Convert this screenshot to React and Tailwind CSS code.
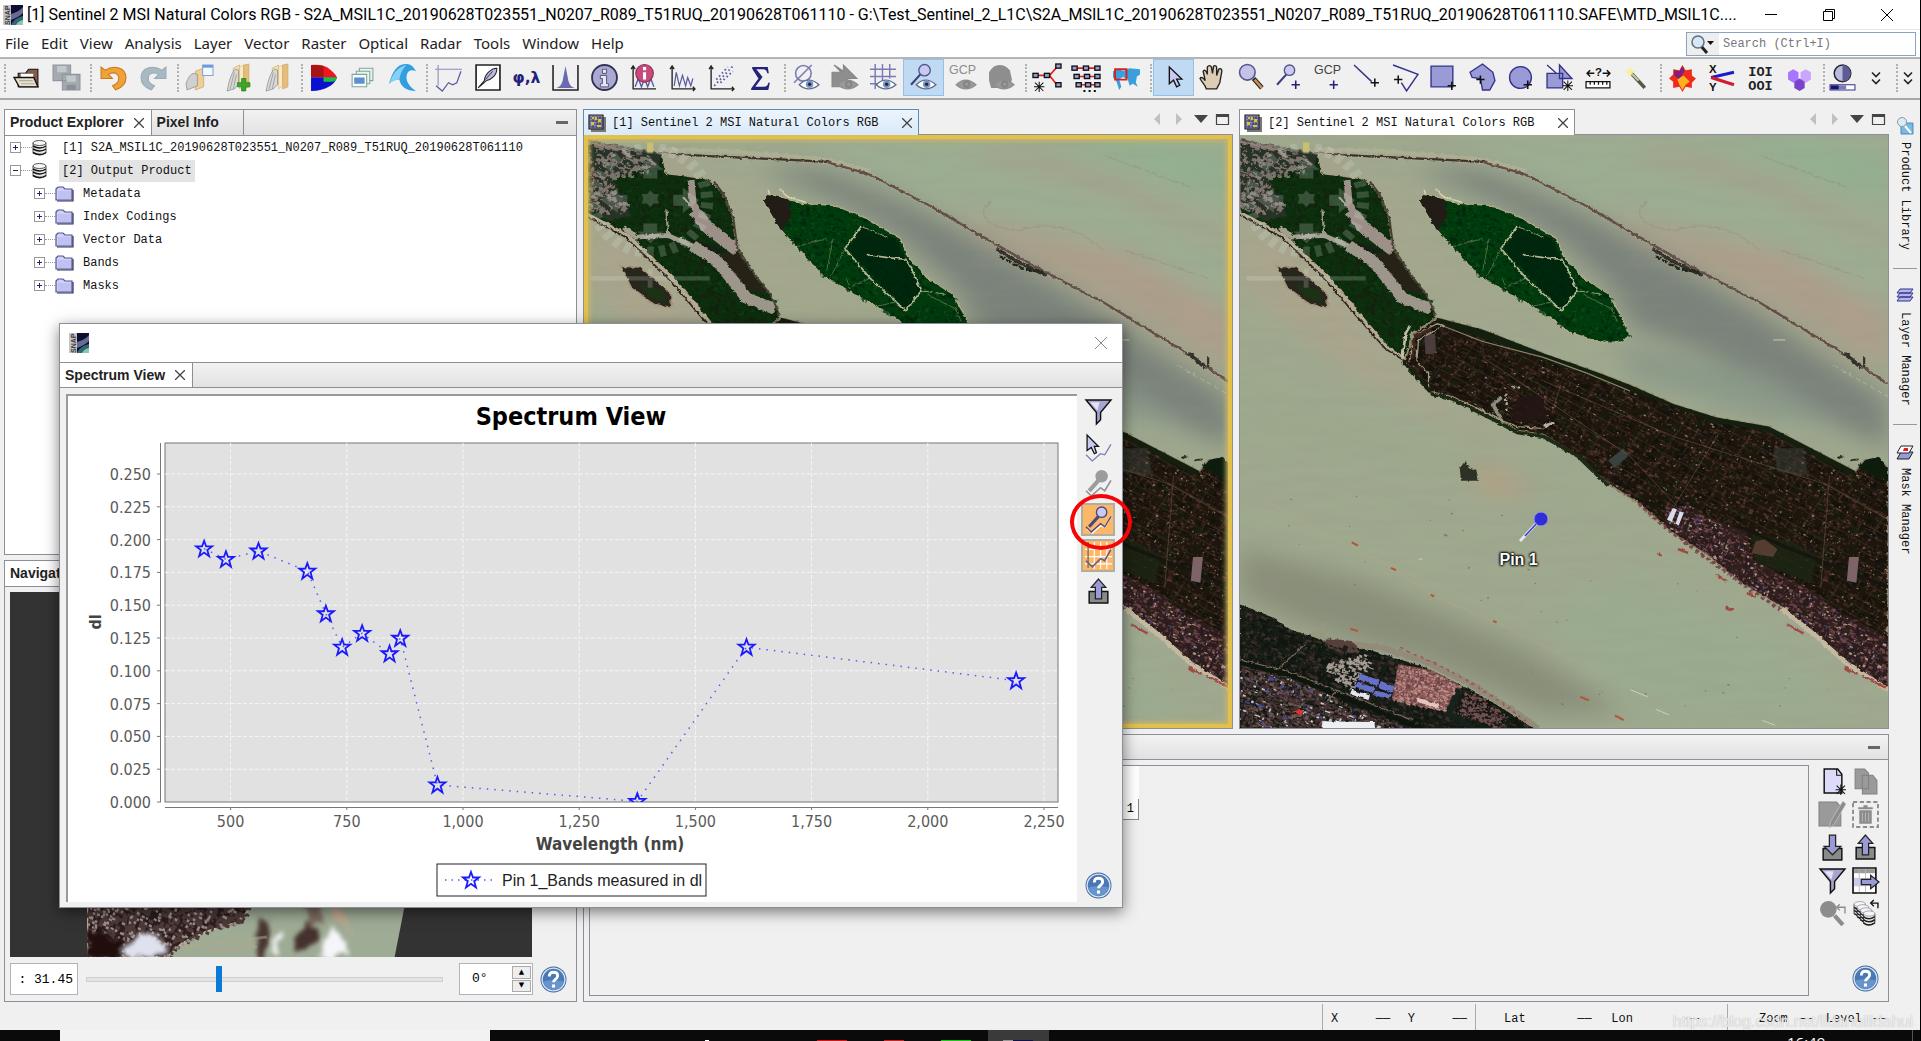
import React from "react";

const FILL = "#9a9ad6";

// small seeded generator so the imagery is stable between renders
const makeRandom = (seed) => () => {
  seed = (seed * 1664525 + 1013904223) % 4294967296;
  return seed / 4294967296;
};

const inside = (pts, x, y) => {
  let hit = false;
  for (let i = 0, j = pts.length - 1; i < pts.length; j = i++) {
    const [xi, yi] = pts[i];
    const [xj, yj] = pts[j];
    if (yi > y !== yj > y && x < ((xj - xi) * (y - yi)) / (yj - yi) + xi) hit = !hit;
  }
  return hit;
};

const specks = (pts, count, max, seed) => {
  const rnd = makeRandom(seed);
  const xs = pts.map((p) => p[0]);
  const ys = pts.map((p) => p[1]);
  const x0 = Math.min(...xs);
  const y0 = Math.min(...ys);
  const w = Math.max(...xs) - x0;
  const h = Math.max(...ys) - y0;
  let d = "";
  for (let i = 0; i < count; i++) {
    const x = x0 + rnd() * w;
    const y = y0 + rnd() * h;
    const a = 2 + rnd() * rnd() * max * 1.6;
    const b = 2 + rnd() * rnd() * max;
    if (inside(pts, x, y)) {
      d += `M${x.toFixed(0)} ${y.toFixed(0)}l${a.toFixed(1)} ${(a * 0.45).toFixed(1)}l${(-b * 0.4).toFixed(1)} ${b.toFixed(1)}l${(-a).toFixed(1)} ${(-a * 0.45).toFixed(1)}z`;
    }
  }
  return d;
};

const toPath = (pts) => "M" + pts.map((p) => p.join(" ")).join("L") + "Z";

const DELTA = [[0, 48], [90, 72], [180, 85], [190, 135], [240, 142], [290, 150], [320, 185], [342, 240], [352, 320], [400, 400], [430, 440], [455, 495], [440, 512], [395, 540], [388, 608], [340, 575], [270, 485], [205, 400], [100, 290], [0, 232]];
const ISLAND = [[415, 205], [425, 190], [455, 196], [500, 212], [580, 218], [650, 250], [728, 300], [745, 345], [790, 400], [848, 440], [880, 500], [896, 545], [880, 560], [830, 560], [760, 535], [700, 485], [610, 430], [550, 390], [490, 320], [450, 270]];
const TOWN = [[400, 540], [455, 500], [560, 530], [700, 590], [830, 640], [900, 670], [1000, 718], [1100, 752], [1220, 775], [1300, 820], [1420, 888], [1440, 860], [1470, 853], [1495, 880], [1495, 1440], [1400, 1370], [1330, 1300], [1250, 1230], [1150, 1165], [1080, 1100], [1000, 1045], [920, 970], [850, 920], [780, 850], [700, 795], [640, 785], [590, 750], [490, 700], [440, 690], [380, 610]];
const PORT = [[980, 975], [1030, 975], [1090, 1010], [1170, 1040], [1180, 1110], [1300, 1180], [1380, 1240], [1495, 1310], [1495, 1440], [1400, 1370], [1330, 1300], [1250, 1230], [1150, 1165], [1080, 1100], [980, 1025]];
const SOUTH = [[0, 1225], [60, 1250], [120, 1290], [200, 1318], [300, 1340], [430, 1385], [530, 1440], [610, 1490], [680, 1540], [0, 1540]];
const SUBURB = [[0, 1375], [110, 1400], [240, 1470], [400, 1540], [0, 1540]];
const SHEDS = [[200, 1370], [290, 1345], [300, 1380], [255, 1440], [200, 1400]];
const ROOFS = [[365, 1375], [440, 1390], [510, 1430], [480, 1495], [350, 1465]];
const BLOCKS = [[520, 1440], [560, 1455], [620, 1510], [600, 1535], [500, 1500]];
const SEA = [[60, 900], [500, 960], [900, 1100], [1300, 1300], [1490, 1530], [700, 1530], [200, 1250], [60, 1050]];

const ART = {
  delta: specks(DELTA, 1800, 9, 3),
  deltaGreen: specks(DELTA, 1200, 8, 4),
  deltaLight: specks([[0, 48], [150, 80], [150, 130], [60, 150], [110, 240], [0, 225]], 360, 14, 9),
  islandDark: specks(ISLAND, 1400, 10, 5),
  islandLight: specks(ISLAND, 1000, 6, 6),
  town1: specks(TOWN, 6000, 7, 11),
  town2: specks(TOWN, 3600, 6, 12),
  town3: specks(TOWN, 3600, 16, 13),
  town4: specks(TOWN, 900, 3, 14),
  town5: specks(TOWN, 1500, 14, 15),
  port1: specks(PORT, 2600, 7, 21),
  port2: specks(PORT, 700, 5, 22),
  port3: specks(PORT, 500, 5, 23),
  port4: specks(PORT, 900, 9, 24),
  south1: specks(SOUTH, 1500, 9, 31),
  south4: specks(SOUTH, 1800, 14, 34),
  south5: specks(SOUTH, 1300, 12, 35),
  suburb1: specks(SUBURB, 1700, 8, 36),
  suburb2: specks(SUBURB, 700, 6, 37),
  suburb3: specks(SUBURB, 160, 7, 38),
  suburb4: specks(SUBURB, 90, 9, 39),
  sheds: specks(SHEDS, 260, 8, 40),
  roofs: specks(ROOFS, 900, 6, 41),
  roofs2: specks(ROOFS, 420, 5, 42),
  blocks: specks(BLOCKS, 420, 6, 43),
  ships: specks(SEA, 80, 4, 51),
};

const Ticks = () => (
  <g fill="#dfe6df" opacity="0.2">
    {Array.from({ length: 30 }, (_, i) => (
      <rect key={i} x="145" y="58" width="15" height="28" transform={`rotate(${i * 12} 153 203)`} />
    ))}
    <path d="M153 96l30 30h-14v22h-32v-22h-14z" />
    <path d="M153 312l30 -30h-14v-20h-32v20h-14z" />
    <path d="M40 203l38 -32v18h22v28h-22v18z" />
    <path d="M266 203l-38 -32v18h-22v28h22v18z" />
    <path d="M153 178l8 9 12 0-4 12 4 12-12 0-8 9-8-9-12 0 4-12-4-12 12 0z" />
    <rect x="15" y="395" width="275" height="11" />
    <rect x="147" y="376" width="11" height="48" />
  </g>
);

const Imagery = ({ id }) => (
  <svg viewBox="0 38 1495 1499" preserveAspectRatio="none" className="absolute inset-0 block h-full w-full" role="img" aria-label="Natural colors image">
    <defs>
      <filter id={`${id}-soft`} x="-30%" y="-30%" width="160%" height="160%">
        <feGaussianBlur stdDeviation="30" />
      </filter>
      <filter id={`${id}-rough`} x="-5%" y="-5%" width="110%" height="110%">
        <feTurbulence type="fractalNoise" baseFrequency="0.09" numOctaves="3" seed="4" />
        <feDisplacementMap in="SourceGraphic" scale="9" xChannelSelector="R" yChannelSelector="G" />
      </filter>
      <filter id={`${id}-grain`} x="0" y="0" width="100%" height="100%">
        <feTurbulence type="fractalNoise" baseFrequency="0.008 0.04" numOctaves="5" seed="8" />
        <feColorMatrix values="0 0 0 0 0.3  0 0 0 0 0.3  0 0 0 0 0.24  0.9 0 0 0 -0.36" />
      </filter>
      <clipPath id={`${id}-town`}>
        <path d={toPath(TOWN)} />
      </clipPath>
      <clipPath id={`${id}-island`}>
        <path d={toPath(ISLAND)} />
      </clipPath>
      <pattern id={`${id}-streets`} width="74" height="42" patternUnits="userSpaceOnUse" patternTransform="rotate(31)">
        <path d="M0 8h74M0 27h40M14 0v42M52 8v19" stroke="#84604f" strokeWidth="1.500" fill="none" />
      </pattern>
    </defs>

    {/* water */}
    <rect y="38" width="1495" height="1499" fill="#9fa98e" />
    <g filter={`url(#${id}-soft)`}>
      <path d="M500 38H1500V640L1200 450 800 210 560 100z" fill="#9cad92" />
      <path d="M820 230L1000 270 1250 330 1500 480V640L1250 480 940 300z" fill="#ad9f8b" />
      <path d="M900 90L1200 180 1500 330V290L1200 130 960 70z" fill="#a5a28c" />
      <path d="M1100 60L1500 200V100L1300 50z" fill="#93b091" />
      <path d="M400 120L560 125 760 215 960 335 1180 475 1495 710V830L1300 740 1100 600 1000 560 900 520 860 430 720 290 600 215z" fill="#7a827a" />
      <path d="M860 560L1200 640 1400 780 1200 750 900 650z" fill="#8a9a89" />
      <path d="M200 130L400 160 420 260 560 440 760 560 1000 640 600 520 460 480z" fill="#a5a78c" />
      <path d="M0 250L160 330 350 600 500 740 700 830 560 800 260 640 0 420z" fill="#aaa58c" />
      <path d="M0 620L400 780 700 880 900 1040 600 940 0 800z" fill="#9da98d" />
      <path d="M0 1080L300 1170 640 1330 900 1500H700L430 1370 150 1280 0 1200z" fill="#898e79" />
      <path d="M540 860L680 920 620 960 540 930z" fill="#b3a085" />
      <path d="M900 1150L1250 1300 1400 1520H900L700 1250z" fill="#9bab8f" />
    </g>
    <rect y="38" width="1495" height="1499" filter={`url(#${id}-grain)`} opacity="0.4" />
    <g fill="none" stroke="#978977" strokeWidth="3" opacity="0.45" filter={`url(#${id}-rough)`}>
      <path d="M940 205C900 240 930 270 1000 280 1060 260 1100 265 1150 290L1200 330" />
      <path d="M1200 90L1400 170M1250 330L1440 400" />
    </g>
    <g fill="none" stroke="#b3a684" strokeWidth="3" opacity="0.6" filter={`url(#${id}-rough)`}>
      <path d="M60 960L190 1045 350 1130 440 1200 590 1270 740 1350" />
      <path d="M740 1350L980 1490M230 1065L420 1165" opacity="0.6" />
    </g>

    {/* sea wall */}
    <g fill="none" filter={`url(#${id}-rough)`}>
      <path d="M180 74L320 78 480 92 560 100 660 128" stroke="#b3b294" strokeWidth="10" opacity="0.7" />
      <path d="M170 84L300 92 460 100 560 106 660 138 800 218 940 308 1070 388 1200 462 1380 582 1495 668" stroke="#c4b598" strokeWidth="9" opacity="0.4" />
      <path d="M170 84L300 92 460 100 560 106 660 138 800 218 940 308 1070 388 1200 462 1380 582 1495 668" stroke="#62504a" strokeWidth="6" />
      <path d="M170 84L300 92 460 100 560 106" stroke="#3d3228" strokeWidth="4" />
      <path d="M950 324L1000 358 1065 392M1395 590L1432 625" stroke="#33302a" strokeWidth="9" />
      <path d="M960 345L1010 375 1060 385" stroke="#23281f" strokeWidth="7" strokeDasharray="12 5" />
      <path d="M1370 620L1495 700" stroke="#b5b5a4" strokeWidth="2" strokeDasharray="12 8" />
    </g>

    {/* delta, upper left */}
    <g filter={`url(#${id}-rough)`}>
      <path d={toPath(DELTA)} fill="#0b2d10" stroke="#a99d86" strokeWidth="4" />
      <path d={ART.deltaGreen} fill="#0d3a14" opacity="0.9" />
      <path d={ART.delta} fill="#171c12" opacity="0.7" />
      <path d="M0 48L180 85 170 120 60 140 110 240 60 255 0 225z" fill="#3a3634" opacity="0.6" />
      <path d={ART.deltaLight} fill="#94857e" opacity="0.8" />
      <path d="M180 82L250 92 240 142 190 132z" fill="#a3a48b" />
      <path d="M0 55L90 75 110 95" fill="none" stroke="#8f8078" strokeWidth="6" />
      <path d="M312 340L352 332 422 438 385 432 332 390z" fill="#272418" />
      <path d="M240 300L300 320 320 335 290 345z" fill="#1c1c14" />
      <path d="M92 272L120 296 195 292 250 318 305 352" fill="none" stroke="#a39e90" strokeWidth="12" />
      <path d="M250 318L305 354 345 408 375 450 440 478" fill="none" stroke="#9d968b" strokeWidth="28" />
      <path d="M247 152L252 215 270 250" fill="none" stroke="#9c9088" strokeWidth="16" />
      <path d="M256 230L285 272 325 306 354 330" fill="none" stroke="#9c9088" strokeWidth="30" />
      <path d="M190 225L194 292M226 192L252 225" stroke="#a09a8c" strokeWidth="5" />
      <path d="M300 156L322 188 344 245 354 325 400 400 432 445 452 495" fill="none" stroke="#4a4034" strokeWidth="5" />
      <path d="M0 236L100 292 205 402 270 487 340 577 392 612" fill="none" stroke="#b5aa90" strokeWidth="10" />
      <path d="M0 240L96 296 200 406 265 491 336 579 390 616" fill="none" stroke="#2b241d" strokeWidth="4" />
      <path d="M375 600L382 540 392 520" fill="none" stroke="#c2bba8" strokeWidth="6" />
      <path d="M85 370L130 372 200 438 202 475 160 465 110 425z" fill="#28281c" stroke="#a59078" strokeWidth="3" />
      <path d="M130 415L180 430 192 462 150 450z" fill="#1c3119" />
    </g>

    {/* green island */}
    <g filter={`url(#${id}-rough)`}>
      <path d={toPath(ISLAND)} fill="#06390d" stroke="#b5a88b" strokeWidth="6" />
      <path d={toPath(ISLAND)} fill="#053a0c" />
      <path d={ART.islandDark} fill="#04260a" opacity="0.7" />
      <path d={ART.islandLight} fill="#0d4a14" opacity="0.8" />
      <path d="M415 205L425 190 470 200 480 240 455 280z" fill="#201f14" />
      <path d="M610 330L640 268 720 300 740 350 776 430 742 478z" fill="#03230a" opacity="0.8" />
      <g clipPath={`url(#${id}-island)`} fill="none" stroke="#b9b698">
        <path d="M640 268L602 325 660 400 742 482 778 432 758 380 742 352 700 348 650 340" strokeWidth="4" />
        <path d="M778 432L835 440M640 268L700 298" strokeWidth="2" />
        <path d="M575 300L560 380M600 330L570 395M660 400L610 425M560 300L490 320M790 440L860 480 870 510M610 420L606 400M680 470L720 460" strokeWidth="2" opacity="0.5" />
      </g>
      <path d="M425 175L428 186M452 175L470 195 512 208" fill="none" stroke="#d9ceb0" strokeWidth="4" />
    </g>

    {/* town */}
    <g filter={`url(#${id}-rough)`}>
      <path d={toPath(TOWN)} fill="#1f1410" stroke="#93886c" strokeWidth="4" />
    </g>
    <g clipPath={`url(#${id}-town)`}>
      <path d={ART.town1} fill="#432822" opacity="0.8" />
      <path d={ART.town3} fill="#0e100b" opacity="0.7" />
      <path d={ART.town5} fill="#18230f" opacity="0.7" />
      <rect x="380" y="490" width="1115" height="950" fill={`url(#${id}-streets)`} opacity="0.35" />
      <path d={ART.town2} fill="#6b463d" opacity="0.6" />
      <path d={ART.town4} fill="#b89e91" opacity="0.7" />
      <path d="M455 500L700 590 900 670 1100 752 1220 775 1420 888" fill="none" stroke="#14200f" strokeWidth="26" />
      <path d="M455 515L560 560 700 600 800 640 900 685" fill="none" stroke="#8a806a" strokeWidth="3" />
      <path d="M640 700L700 695 705 760 625 760z" fill="#241515" opacity="0.9" />
      <path d="M425 545L450 540 452 590 428 592z" fill="#4c3e3c" />
      <path d="M1230 830L1300 830 1310 900 1240 890z" fill="#3d443d" opacity="0.45" />
      <path d="M1180 1040L1280 1070 1330 1100 1320 1170 1190 1120z" fill="#1b2413" opacity="0.85" />
      <path d="M1190 1065L1210 1060 1240 1085 1230 1105 1180 1095z" fill="#553c30" />
      <path d="M850 860L885 830 895 850 865 880z" fill="#3a423f" />
      <path d="M920 960L1080 1020 1170 1035 1260 1080 1495 1180" fill="none" stroke="#15160f" strokeWidth="8" />
      <path d="M700 660L1000 800 1350 920 1495 1010M560 600L900 850 1020 990M1360 900L1340 1180M1100 800L1000 980M720 740L740 670" fill="none" stroke="#8a6355" strokeWidth="2" opacity="0.55" />
      <path d={toPath(PORT)} fill="#3d2429" opacity="0.5" />
      <path d={ART.port4} fill="#241a1a" opacity="0.8" />
      <path d={ART.port1} fill="#7d4f52" opacity="0.75" />
      <path d={ART.port2} fill="#d9c6c0" opacity="0.7" />
      <path d={ART.port3} fill="#5a55a8" opacity="0.6" />
      <path d="M985 1010L998 982 1008 984 996 1016zM1005 1020L1014 990 1024 992 1012 1026z" fill="#d8dcea" />
      <path d="M1405 1105L1428 1105 1422 1170 1400 1165z" fill="#7d6468" />
    </g>
    <g fill="none" filter={`url(#${id}-rough)`}>
      <path d="M390 612L400 545 455 515 470 520 412 555 408 610 435 640 435 685 490 700 590 752 640 775 700 780" stroke="#a59b80" strokeWidth="3" />
      <path d="M398 600L403 548 440 528" stroke="#3d2b22" strokeWidth="8" />
      <path d="M602 755L584 720 604 700" stroke="#8e8c80" strokeWidth="9" />
      <path d="M612 692L618 740M628 676h18" stroke="#b5b0a4" strokeWidth="5" strokeDasharray="7 5" />
      <path d="M700 775L725 765" stroke="#b8ae9e" strokeWidth="8" />
      <path d="M375 610L440 688" stroke="#12200f" strokeWidth="9" />
      <path d="M440 692L490 705 590 760 640 790 700 800 780 850 850 925" stroke="#1a2a16" strokeWidth="9" />
      <path d="M920 970L980 1030 1080 1110 1160 1175 1250 1240" stroke="#7a4a4a" strokeWidth="8" strokeDasharray="9 7" />
      <path d="M1250 1235L1330 1305 1400 1375 1495 1440" stroke="#c4b9a0" strokeWidth="11" />
      <path d="M1100 1150L1122 1165M965 1095L972 1103M1010 1085L1035 1095M1170 1195L1190 1206M1120 1232L1137 1238M1262 1275L1300 1298M1395 1385L1425 1400M1435 1405L1490 1435" stroke="#a04a42" strokeWidth="6" />
      <path d="M1440 600V625M1380 855L1392 850M1410 860L1425 858" stroke="#332f28" strokeWidth="5" />
    </g>
    <path d="M1425 875L1445 858 1475 852 1495 885V915L1450 895z" fill="#0f1f0e" filter={`url(#${id}-rough)`} />

    {/* south bank */}
    <g filter={`url(#${id}-rough)`}>
      <path d={toPath(SOUTH)} fill="#151a12" />
      <path d="M200 1315L330 1335 430 1370 530 1425 640 1500 690 1540" fill="none" stroke="#928b79" strokeWidth="15" />
      <path d="M160 1300L200 1265 195 1320z" fill="#96997f" />
      <path d="M200 1310L260 1318 276 1345 240 1350 195 1330z" fill="#54413a" />
    </g>
    <path d={ART.south5} fill="#33231f" opacity="0.6" />
    <path d={ART.south4} fill="#0d150d" opacity="0.8" />
    <path d={ART.south1} fill="#5c4640" opacity="0.5" />
    <path d={ART.suburb1} fill="#4d3536" opacity="0.9" />
    <path d={ART.suburb2} fill="#7d6663" opacity="0.75" />
    <path d={ART.suburb3} fill="#e2dcdc" opacity="0.85" />
    <path d={ART.suburb4} fill="#4a52b8" opacity="0.7" />
    <path d={ART.sheds} fill="#c4bbb2" opacity="0.8" />
    <path d={toPath(ROOFS)} fill="#6e4444" />
    <path d={ART.roofs} fill="#9a6462" opacity="0.9" />
    <path d={ART.roofs2} fill="#c49c98" opacity="0.8" />
    <path d={ART.blocks} fill="#7d5558" opacity="0.9" />
    <g filter={`url(#${id}-rough)`}>
      <path d="M278 1400L322 1416 316 1430 272 1414zM325 1418L358 1432 350 1448 318 1436zM270 1420L312 1436 306 1448 262 1434zM312 1442L350 1452 344 1464 308 1454z" fill="#6670c8" />
      <path d="M258 1440L300 1455 296 1466 254 1452z" fill="#e5e6f4" />
      <path d="M410 1460L460 1478 455 1488 408 1470z" fill="#e2c4c0" />
      <path d="M190 1520L310 1522 312 1540H188z" fill="#eceff4" />
      <path d="M120 1495L145 1490 142 1505z" fill="#d83434" />
      <path d="M0 1372L110 1402 220 1452 420 1540" fill="none" stroke="#10140f" strokeWidth="12" />
      <path d="M0 1365L110 1393 225 1443 400 1518M150 1325L90 1385M225 1443L200 1470" fill="none" stroke="#7a6a5a" strokeWidth="3" />
      <path d="M505 1440L480 1500 540 1537" fill="none" stroke="#16211a" strokeWidth="14" />
      <path d="M370 1335L430 1365 500 1400 600 1470 660 1520" fill="none" stroke="#a05650" strokeWidth="4" strokeDasharray="8 9" />
    </g>

    {/* rock, ships */}
    <path d="M507 880L520 862 528 878 545 885 551 912H510z" fill="#2f3226" filter={`url(#${id}-rough)`} />
    <path d={ART.ships} fill="#7d6455" opacity="0.7" />
    <path d="M258 1068L272 1076M348 1132L360 1138M440 1200L448 1205M584 1266L592 1270M255 1286L272 1292M785 1458L805 1467M865 1505L885 1517" stroke="#b5543c" strokeWidth="5" />
    <path d="M412 1110h9M1230 556h28M1205 1518l30 12M900 1440l40 18M960 1490l30 14" stroke="#d2d8c0" strokeWidth="2" />
    <rect x="146" y="56" width="14" height="26" fill="#cdb84a" opacity="0.8" />
    <Ticks />
  </svg>
);

const Svg = ({ children }) => (
  <svg viewBox="0 0 26 26" className="h-[27px] w-[27px] shrink-0 overflow-visible" fill="none" aria-hidden="true">
    {children}
  </svg>
);

const Plus = ({ x = 20, y = 20, c = "#111" }) => <path d={`M${x - 4} ${y}h8M${x} ${y - 4}v8`} stroke={c} strokeWidth="1.500" />;
const Spark = ({ x = 20, y = 20 }) => (
  <path d={`M${x - 5} ${y}h10M${x} ${y - 5}v10M${x - 4} ${y - 4}l8 8M${x + 4} ${y - 4}l-8 8`} stroke="#111" strokeWidth="1" />
);
const Eye = ({ gray }) => (
  <g>
    <path d="M6 20q9-9 19 0q-10 8-19 0z" fill={gray ? "#9a9a9a" : "#fff"} stroke={gray ? "#8f8f8f" : "#5d6b8c"} strokeWidth="1.200" />
    <circle cx="16" cy="19.500" r="3.600" fill={gray ? "#858585" : "#7f97bd"} />
    <circle cx="16" cy="19.500" r="1.600" fill={gray ? "#9a9a9a" : "#1c2b52"} />
  </g>
);
const Nodes = ({ pts }) => pts.map(([x, y]) => <rect key={`${x}-${y}`} x={x} y={y} width="5" height="4" fill="#9a9ad6" stroke="#111" strokeWidth="1.300" />);

const Books = ({ extra }) => (
  <g>
    <path d="M8 4l6-3v18l-6 4z" fill="#f3dcae" stroke="#c9a566" strokeWidth=".6" />
    <path d="M14 3l4-2v20l-4 3z" fill="#fbe9c4" stroke="#d6b67d" strokeWidth=".6" />
    <path d="M18 1l5-1v22l-5 2z" fill="#e6bd7c" stroke="#c9a566" strokeWidth=".7" />
    <path d="M4 17q3-10 6-12l3 1v14l-4 4-7 2z" fill="#d8d8d6" stroke="#8a8a88" strokeWidth=".7" />
    <path d="M5 24l4-16M8 24l3-14" stroke="#8f8f8d" strokeWidth=".7" />
    {extra}
  </g>
);

const Pointer = () => <path d="M9 3v16l4-3.500 3 6.500 3-1.500-3-6h5z" fill="#c9c9f2" stroke="#111" strokeWidth="1.300" />;

const icons = {
  open: (
    <Svg>
      <path d="M5 9h7l3-4h9v17H5z" fill="#8a5a48" stroke="#111" />
      <path d="M7 9h13v6H7z" fill="#fff" stroke="#555" strokeWidth=".7" />
      <path d="M1 13h19l4 9H6z" fill="#e6e0cc" stroke="#111" strokeWidth="1.300" />
      <path d="M6 16h13M8 19h13" stroke="#b3ad98" />
    </Svg>
  ),
  save: (
    <Svg>
      <path d="M0 1h17v15H0zM9 10h17v15H9z" fill="#a5aab0" stroke="#8f959c" />
      <path d="M4 2h9v6H4zM13 11h9v6h-9z" fill="#c3c8cc" />
      <path d="M13 20h9v5h-9z" fill="#8b9096" />
    </Svg>
  ),
  undo: (
    <Svg>
      <path d="M1 3v11h11l-4-4c5-3 10-1 10 4 0 4-3 6-6 7l3 4c6-2 10-6 10-12C25 4 14 0 5 6z" fill="#f0a13a" stroke="#c77a1c" />
    </Svg>
  ),
  redo: (
    <Svg>
      <path d="M25 3v11H14l4-4c-5-3-10-1-10 4 0 4 3 6 6 7l-3 4C5 23 1 19 1 13 1 4 12 0 21 6z" fill="#a9b9c3" stroke="#9aabb6" />
    </Svg>
  ),
  bookWindow: (
    <Svg>
      <path d="M9 7l8-3v18l-8 3z" fill="#f0cf96" stroke="#c9a566" strokeWidth=".7" />
      <path d="M0 19q3-9 7-10l4 1v11l-10 4z" fill="#d0d0ce" stroke="#8a8a88" strokeWidth=".7" />
      <path d="M16 1h10v10H16z" fill="#f4f8ff" stroke="#7fa3d8" />
      <path d="M16 1h10v2.500H16z" fill="#6c98dc" />
    </Svg>
  ),
  bookAdd: (
    <Svg>
      <Books extra={<path d="M16 14h4v4h4v4h-4v4h-4v-4h-4v-4h4z" fill="#37a828" stroke="#1f7d16" strokeWidth=".7" />} />
    </Svg>
  ),
  book: (
    <Svg>
      <Books />
    </Svg>
  ),
  rgb: (
    <Svg>
      <path d="M1 1q12-1 18 4t7 8H1z" fill="#f0141c" />
      <path d="M1 1q7 0 12 1v11H1z" fill="#a81414" />
      <path d="M1 13h25q-2 6-8 9-6 4-17 4z" fill="#0a10d0" />
      <path d="M13 13h13q-1 4-5 4h-8z" fill="#18c03a" />
    </Svg>
  ),
  stack: (
    <Svg>
      <path d="M10 4h13v12H10z" fill="#e8f2ee" stroke="#7fa696" />
      <path d="M7 7h13v12H7z" fill="#e8f2ee" stroke="#7fa696" />
      <path d="M3 10h14v12H3z" fill="#f7faff" stroke="#7fa696" />
      <path d="M5 13h10v6H5z" fill="#5e8fd0" />
    </Svg>
  ),
  wave: (
    <Svg>
      <path d="M0 19C3 8 8 -1 17 0c4 0 7 3 9 7-4-2-8-1-9 4-1 6 3 11 9 15-9 0-15-4-16-11-3 0-7 1-10 4z" fill="#2f9fe0" />
      <path d="M0 19C4 9 9 2 17 1 13 5 11 9 10 15c-3 0-7 1-10 4z" fill="#86d0f5" />
    </Svg>
  ),
  lineChart: (
    <Svg>
      <path d="M0 5h26M3 1v20" stroke="#8a8ab8" strokeWidth="1" />
      <path d="M1 21l6 5 6-8 4 2 4-2 4-11" stroke="#5a5aa0" strokeWidth="1.200" />
    </Svg>
  ),
  quill: (
    <Svg>
      <path d="M2 1h23v24H2z" fill="#fff" stroke="#222" strokeWidth="1.600" />
      <path d="M4 23l6-7c0-5 6-12 12-12 0 7-5 11-10 12z" fill="#b9b9e2" stroke="#222" />
      <path d="M11 15l7-8" stroke="#222" strokeWidth=".8" />
    </Svg>
  ),
  phi: (
    <Svg>
      <text x="13" y="18" textAnchor="middle" className="font-['DejaVu_Sans',sans-serif] text-[15px] font-bold" fill="#23237a">φ,λ</text>
    </Svg>
  ),
  histogram: (
    <Svg>
      <path d="M1 1v24h24V1" stroke="#222" strokeWidth="1.500" />
      <path d="M4 23q6-1 7-11l2-10 2 10q1 10 7 11z" fill="#6a6ab0" />
    </Svg>
  ),
  info: (
    <Svg>
      <circle cx="13" cy="13" r="12" fill="#a9a9d2" stroke="#333355" strokeWidth="1.800" />
      <path d="M9 11h6v8h2v3H9v-3h2v-5H9zM11 5h4v4h-4z" fill="#e6e6f5" stroke="#44446a" strokeWidth=".8" />
    </Svg>
  ),
  infoChart: (
    <Svg>
      <path d="M3 3v21h22M1 5l2-3 2 3" stroke="#222" strokeWidth="1.300" />
      <path d="M5 22l3-8 3 8 3-8 3 8 3-8 3 8" stroke="#5a5aa0" strokeWidth="1.300" />
      <circle cx="14" cy="9" r="8.500" fill="#c74a7d" stroke="#8c2b54" />
      <path d="M12.500 8h3v7h-3zM12.500 3h3v3h-3z" fill="#fff" />
    </Svg>
  ),
  profile: (
    <Svg>
      <path d="M3 3v21h22M1 5l2-3 2 3M23 22l2 2-2 2" stroke="#222" strokeWidth="1.300" />
      <path d="M5 21l2-13 3 13 3-10 3 10 2-8 3 8 2-7" stroke="#5a5aa0" strokeWidth="1.200" />
    </Svg>
  ),
  scatter: (
    <Svg>
      <path d="M3 3v21h22M1 5l2-3 2 3M23 22l2 2-2 2" stroke="#222" strokeWidth="1.300" />
      <path d="M6 21l18-19M8 15l11-12M12 18l12-11" stroke="#5a5aa0" strokeWidth="1.800" strokeDasharray="1.500 2.500" />
    </Svg>
  ),
  sigma: (
    <Svg>
      <path d="M5 3h15l1 6h-1.500c-.5-3-1.500-4-4-4H9l6 7.500L8 22h8c3 0 4-1.500 4.500-4H22l-1.500 7H4v-1.500L11 14 5 4.500z" fill="#23237a" />
    </Svg>
  ),
  noData: (
    <Svg>
      <circle cx="10" cy="9" r="7.500" stroke="#7a7ab5" strokeWidth="1.500" />
      <path d="M1 18L18 1" stroke="#7a7ab5" strokeWidth="1.500" />
      <Eye />
    </Svg>
  ),
  shapesEye: (
    <Svg>
      <path d="M0 8h9L2 1l9 6V1l13 13H15v8H0z" fill="#8e8e8e" stroke="#868686" />
      <Eye gray />
    </Svg>
  ),
  gridEye: (
    <Svg>
      <path d="M5 0v24M12 0v18M19 0v14M0 5h25M0 12h25M0 19h8" stroke="#7a7ab5" strokeWidth="1.400" />
      <Eye />
    </Svg>
  ),
  pinEye: (
    <Svg>
      <path d="M1 20l9-10" stroke="#3d3d7a" strokeWidth="2" />
      <circle cx="14" cy="6" r="5.500" fill="#c9c9f2" stroke="#55558c" strokeWidth="1.300" />
      <Eye />
    </Svg>
  ),
  gcpEye: (
    <Svg>
      <text x="12" y="10" textAnchor="middle" className="font-['Liberation_Sans',sans-serif] text-[12px]" fill="#8c8c8c">GCP</text>
      <Eye gray />
    </Svg>
  ),
  maskEye: (
    <Svg>
      <path d="M1 16V8q4-7 10-7t10 5l2 9-2 8H3z" fill="#8e8e8e" />
      <Eye gray />
    </Svg>
  ),
  graph: (
    <Svg>
      <path d="M4 11h9M15 11l7-8M15 11l7 9" stroke="#e02020" strokeWidth="1.600" />
      <Nodes pts={[[-1, 9], [10, 9], [21, 0], [21, 18]]} />
      <Spark x={5} y={22} />
    </Svg>
  ),
  batch: (
    <Svg>
      <path d="M0 4h25M3 12h22M5 20h20" stroke="#e02020" strokeWidth="1.600" />
      <Nodes pts={[[-1, 2], [10, 2], [21, 2], [1, 10], [11, 10], [21, 10], [3, 18], [12, 18], [21, 18]]} />
      <path d="M10 26h2M15 26h2M20 26h2" stroke="#111" strokeWidth="2" />
    </Svg>
  ),
  world: (
    <Svg>
      <path d="M0 7l5-2 6 2-1 5-4 3 2 7-2 3-3-9-3-3zM11 6l5-2 10 1 0 5-3 2-1 6 2 4-5-3-3 2-2-7-4-1z" fill="#3aa0dd" />
      <path d="M2 5h11v10H2z" stroke="#d82020" strokeWidth="1.800" />
    </Svg>
  ),
  select: (
    <Svg>
      <Pointer />
    </Svg>
  ),
  pan: (
    <Svg>
      <path d="M7 24c-1-4-4-6-6-10 1-2 3-1 5 2L4 7c1-2 3-1 4 3l0-7c1-2 3-2 4 0l1 6 1-7c2-1 3 0 3 2l0 7 2-6c2-1 3 0 3 2l-2 11-3 6z" fill="#dccdb4" stroke="#222" strokeWidth="1.300" />
    </Svg>
  ),
  zoom: (
    <Svg>
      <path d="M15 14l8 9" stroke="#222" strokeWidth="4.500" />
      <path d="M16 15l7 8" stroke="#c98f55" strokeWidth="2.500" />
      <circle cx="9" cy="8" r="7.500" fill="#c3c3ea" stroke="#55558c" strokeWidth="1.500" />
    </Svg>
  ),
  pinAdd: (
    <Svg>
      <path d="M1 20l9-10" stroke="#3d3d7a" strokeWidth="2" />
      <circle cx="13" cy="6" r="5" fill="#c9c9f2" stroke="#55558c" strokeWidth="1.300" />
      <Plus x={19} y={20} c="#23237a" />
    </Svg>
  ),
  gcpAdd: (
    <Svg>
      <text x="12" y="10" textAnchor="middle" className="font-['Liberation_Sans',sans-serif] text-[12px]" fill="#444">GCP</text>
      <Plus x={18} y={20} c="#23237a" />
    </Svg>
  ),
  lineAdd: (
    <Svg>
      <path d="M1 1l17 16" stroke="#33338c" strokeWidth="1.400" />
      <Plus x={21} y={18} />
    </Svg>
  ),
  polylineAdd: (
    <Svg>
      <path d="M1 1l24 9-11 16-5-8" stroke="#33338c" strokeWidth="1.400" />
      <Plus x={6} y={15} />
    </Svg>
  ),
  rectAdd: (
    <Svg>
      <path d="M1 2h21v20H1z" fill={FILL} stroke="#33338c" strokeWidth="1.300" />
      <Plus x={21} y={21} />
    </Svg>
  ),
  polygonAdd: (
    <Svg>
      <path d="M13 0l10 8 2 8-5 9h-7l-2-11-8-1-2-5z" fill={FILL} stroke="#33338c" strokeWidth="1.300" />
      <Plus x={11} y={15} />
    </Svg>
  ),
  ellipseAdd: (
    <Svg>
      <circle cx="12" cy="13" r="10.500" fill={FILL} stroke="#33338c" strokeWidth="1.300" />
      <Plus x={19} y={20} />
    </Svg>
  ),
  shapesNew: (
    <Svg>
      <path d="M1 1l9 8M13 1l12 13H13zM1 9h15v14H1z" fill={FILL} stroke="#33338c" strokeWidth="1.300" />
      <Spark x={21} y={21} />
    </Svg>
  ),
  ruler: (
    <Svg>
      <path d="M2 9h7M17 9h7M5 6L2 9l3 3M21 6l3 3-3 3" stroke="#111" strokeWidth="1.400" />
      <text x="13" y="12" textAnchor="middle" className="font-['Liberation_Sans',sans-serif] text-[11px] font-bold" fill="#111">?</text>
      <path d="M1 17h23v6H1zM5 17v3M9 17v3M13 17v3M17 17v3M21 17v3" fill="#fff" stroke="#111" strokeWidth="1.200" />
    </Svg>
  ),
  wand: (
    <Svg>
      <path d="M8 9l13 14" stroke="#555a48" strokeWidth="3.500" />
      <path d="M8 9l7 7" stroke="#c9c9a8" strokeWidth="2" />
      <path d="M7 2l1.500 4 4 1-4 2L7 14l-2-5-4-1 4-2z" fill="#f7ef9a" />
    </Svg>
  ),
  burst: (
    <Svg>
      <path d="M13 1l3 5 6-1 0 6 4 3-4 4 0 5-6-1-3 5-3-5-6 1 0-6-4-3 4-4 0-5 6 1z" fill="#ee2c1c" />
      <path d="M5 6l5 1 3-5 2 5-5 8-5-4z" fill="#5b1c9c" opacity=".75" />
      <path d="M8 15l6-4 6 6-4 3-3 5-3-5z" fill="#ffb01c" />
    </Svg>
  ),
  xy: (
    <Svg>
      <path d="M3 13l22-5" stroke="#1c1ccf" strokeWidth="3" />
      <path d="M3 13l22 7" stroke="#cf1c2c" strokeWidth="3" />
      <text x="1" y="9" className="font-['Liberation_Sans',sans-serif] text-[11px] font-bold" fill="#111">X</text>
      <text x="1" y="26" className="font-['Liberation_Sans',sans-serif] text-[11px] font-bold" fill="#111">Y</text>
    </Svg>
  ),
  bits: (
    <Svg>
      <text x="13" y="12" textAnchor="middle" className="font-['Liberation_Mono',monospace] text-[13px] font-bold" fill="#222">IOI</text>
      <text x="13" y="25" textAnchor="middle" className="font-['Liberation_Mono',monospace] text-[13px] font-bold" fill="#222">OOI</text>
    </Svg>
  ),
  hexes: (
    <Svg>
      <path d="M7 5l5 3v7l-5 3-5-3V8z" fill="#a974ff" />
      <path d="M19 5l5 3v7l-5 3-5-3V8z" fill="#c9a5ff" />
      <path d="M13 14l5 3v6l-5 3-5-3v-6z" fill="#7a43cc" />
    </Svg>
  ),
  contrast: (
    <Svg>
      <circle cx="13" cy="9" r="8" fill="#b9b9e2" stroke="#222" strokeWidth="1.400" />
      <path d="M13 1a8 8 0 010 16z" fill="#5d5d94" />
      <path d="M1 20h24v5H1z" fill="#fff" stroke="#33338c" />
      <path d="M1.500 20.500h8v4h-8z" fill="#14146a" />
      <path d="M9.500 20.500h7v4h-7z" fill="#7a7ab5" />
    </Svg>
  ),
  more: (
    <svg viewBox="0 0 12 26" className="h-[27px] w-3" fill="none" aria-hidden="true">
      <path d="M2 8l4 4 4-4M2 15l4 4 4-4" stroke="#222" strokeWidth="1.600" />
    </svg>
  ),
  filter: (
    <Svg>
      <path d="M1 2h24L15 14v7l-4 4V14z" fill="#a5a5cf" stroke="#111" strokeWidth="1.400" />
      <path d="M5 4h9l-2 8z" fill="#e3e3f5" />
    </Svg>
  ),
  cursorSpectrum: (
    <Svg>
      <path d="M1 20l6 6 8-7 4 1 6-10" stroke="#7a7ab5" strokeWidth="1.200" />
      <path d="M2 1v15l4-3 3 6 2-1-2-6h4z" fill="#c9c9f2" stroke="#111" strokeWidth="1.200" />
    </Svg>
  ),
  pinGray: (
    <Svg>
      <circle cx="16" cy="6" r="6" fill="#9c9c9c" />
      <path d="M4 20l9-10" stroke="#9c9c9c" strokeWidth="4" />
      <path d="M1 20l5 5 9-8 4 3 6-10" stroke="#8e8e8e" strokeWidth="1.500" />
    </Svg>
  ),
  pinSpectrum: (
    <Svg>
      <path d="M4 20l9-10" stroke="#4a4a80" strokeWidth="3" />
      <circle cx="16" cy="6" r="5" fill="#c9c9f2" stroke="#4a4a80" strokeWidth="1.300" />
      <path d="M2 22l5 4 8-7 4 1 6-10" stroke="#fff" strokeWidth="1.500" />
      <path d="M1 20l5 5 9-8 4 3 6-10" stroke="#4a4a80" strokeWidth="1.300" />
    </Svg>
  ),
  gridSpectrum: (
    <Svg>
      <path d="M9 0v26M15 0v26M21 0v26M0 7h26M0 14h26M0 21h26" stroke="#fff" strokeWidth="1.200" />
      <path d="M3 0v25" stroke="#7d7766" strokeWidth="1.400" />
      <path d="M1 18l6 6 8-8 4 2 6-11" stroke="#5f6088" strokeWidth="1.500" />
    </Svg>
  ),
  exportUp: (
    <Svg>
      <path d="M4 13h18v11H4z" fill="#8a8a8a" stroke="#111" strokeWidth="1.400" />
      <path d="M13 1l7 8h-4v11h-6V9H6z" fill="#9a9ad6" stroke="#222" strokeWidth="1.200" />
    </Svg>
  ),
  importDown: (
    <Svg>
      <path d="M4 14h18v11H4z" fill="#8a8a8a" stroke="#111" strokeWidth="1.400" />
      <path d="M13 20L5 12h5V1h6v11h5z" fill="#9a9ad6" stroke="#222" strokeWidth="1.200" />
    </Svg>
  ),
  newPin: (
    <Svg>
      <path d="M5 1h13l4 5v18H5z" fill="#dcdcfa" stroke="#111" strokeWidth="1.400" />
      <path d="M17 1v6h5" stroke="#111" />
      <Spark x={21} y={21} />
    </Svg>
  ),
  copy: (
    <Svg>
      <path d="M3 1h9l4 4v15H3zM10 7h10l4 5v13H10z" fill="#9a9a9a" stroke="#808080" />
    </Svg>
  ),
  edit: (
    <Svg>
      <path d="M0 1h17l4 5v18H0z" fill="#9a9a9a" stroke="#808080" />
      <path d="M23 0l3 3-12 20-4 3 1-6z" fill="#8c8c8c" stroke="#d0d0d0" strokeWidth=".6" />
    </Svg>
  ),
  remove: (
    <Svg>
      <path d="M1 1h24v24H1z" stroke="#8c8c8c" strokeWidth="1.800" strokeDasharray="4 2.500" />
      <path d="M7 9h12v13H7zM6 6h14v2H6zM11 4h4v2h-4z" fill="#8c8c8c" />
      <path d="M10 11v9M13 11v9M16 11v9" stroke="#b5b5b5" />
    </Svg>
  ),
  tableExport: (
    <Svg>
      <path d="M1 1h22v24H1z" fill="#fff" stroke="#111" strokeWidth="1.600" />
      <path d="M2 2h20v4H2z" fill="#9a9a9a" />
      <path d="M7 2v22M13 2v22M2 11h20M2 18h20" stroke="#b5b5b5" strokeWidth=".8" />
      <path d="M2 11h8v7H2z" fill="#c9c9f2" />
      <path d="M9 12h9V8l8 6.500-8 6.500v-4H9z" fill="#9a9ad6" stroke="#222" strokeWidth="1.200" />
    </Svg>
  ),
  zoomPin: (
    <Svg>
      <circle cx="9" cy="9" r="8" fill="#8c8c8c" />
      <path d="M15 15l8 9" stroke="#8c8c8c" strokeWidth="4" />
      <path d="M25 13V7h-7M20 4l-3 3 3 3" stroke="#8c8c8c" strokeWidth="1.300" />
    </Svg>
  ),
  transfer: (
    <Svg>
      {[0, 3, 6, 9].map((o) => (
        <g key={o} stroke="#222" strokeWidth=".8">
          <path d={`M${2 + o} ${4 + o}v9q5 4 11 0v-9z`} fill="#eee" />
          <path d={`M${2 + o} ${7 + o}q5 4 11 0M${2 + o} ${10 + o}q5 4 11 0M${2 + o} ${13 + o}q5 4 11 0`} strokeWidth="1.500" />
          <ellipse cx={7.5 + o} cy={4 + o} rx="5.500" ry="2.500" fill="#f5f5ff" stroke="#999" />
        </g>
      ))}
      <path d="M25 8V3h-6M21 0l-3 3 3 3" stroke="#111" strokeWidth="1.300" />
    </Svg>
  ),
};

const HelpIcon = () => (
  <svg viewBox="0 0 26 26" className="h-[27px] w-[27px] shrink-0" aria-hidden="true">
    <circle cx="13" cy="13" r="12.500" fill="#3c659f" />
    <circle cx="13" cy="13" r="11" fill="#4a78b5" stroke="#dbe7f5" strokeWidth="1.300" />
    <path d="M3 15q10-3 20 0q-3 8-10 8t-10-8z" fill="#7ba6da" opacity=".6" />
    <path d="M9 10q0-4 4-4t4 3.500q0 2-2 3.200t-2 3" fill="none" stroke="#fff" strokeWidth="2.800" />
    <path d="M11.500 17.800h3v3h-3z" fill="#fff" />
  </svg>
);

const SnapLogo = () => (
  <svg viewBox="0 0 20 20" className="h-5 w-5 shrink-0" aria-hidden="true">
    <path d="M0 0h8v20H0z" fill="#c4c4c4" />
    <text transform="translate(7 20) rotate(-90)" className="font-['Liberation_Sans',sans-serif] text-[7px] font-bold" fill="#333">SNAP</text>
    <path d="M8 0h12v20H8z" fill="#0e0e30" />
    <path d="M8 9q8-2 12-7v6q-4 4-12 7z" fill="#6a6a92" />
    <path d="M8 20q3-7 12-9v9z" fill="#2f6a72" />
    <path d="M13 20q2-4 7-5v5z" fill="#8fc5b8" />
  </svg>
);

const toolbar = [
  { width: "w-[86px]", items: ["open", "save"] },
  { width: "w-[87px]", items: ["undo", "redo"] },
  { width: "w-[124px]", items: ["bookWindow", "bookAdd", "book"] },
  { width: "w-[125px]", items: ["rgb", "stack", "wave"] },
  { width: "w-[358px]", items: ["lineChart", "quill", "phi", "histogram", "info", "infoChart", "profile", "scatter", "sigma"] },
  { width: "w-[241px]", items: ["noData", "shapesEye", "gridEye", "pinEye", "gcpEye", "maskEye"] },
  { width: "w-[125px]", items: ["graph", "batch", "world"] },
  { width: "w-[510px]", items: ["select", "pan", "zoom", "pinAdd", "gcpAdd", "lineAdd", "polylineAdd", "rectAdd", "polygonAdd", "ellipseAdd", "shapesNew", "ruler", "wand"] },
  { width: "w-[163px]", items: ["burst", "xy", "bits", "hexes"] },
  { width: "w-[73px]", items: ["contrast", "more"] },
  { width: "w-[24px]", items: ["more"] },
];

const selectedTools = ["pinEye", "select"];

const menus = ["File", "Edit", "View", "Analysis", "Layer", "Vector", "Raster", "Optical", "Radar", "Tools", "Window", "Help"];

const TitleBar = () => (
  <header className="flex h-[29px] shrink-0 items-center bg-white pl-[3px]">
    <SnapLogo />
    <h1 className="ml-1 min-w-0 flex-1 overflow-hidden font-['Roboto',sans-serif] text-[16px] whitespace-nowrap text-black">
      [1] Sentinel 2 MSI Natural Colors RGB - S2A_MSIL1C_20190628T023551_N0207_R089_T51RUQ_20190628T061110 - G:\Test_Sentinel_2_L1C\S2A_MSIL1C_20190628T023551_N0207_R089_T51RUQ_20190628T061110.SAFE\MTD_MSIL1C....
    </h1>
    <div className="flex pr-1">
      <button aria-label="Minimize" className="flex h-7 w-[58px] items-center justify-center">
        <svg viewBox="0 0 12 12" className="h-3 w-3"><path d="M0 5.500h12" stroke="#000" /></svg>
      </button>
      <button aria-label="Restore" className="flex h-7 w-[58px] items-center justify-center">
        <svg viewBox="0 0 12 12" className="h-3 w-3" fill="none"><path d="M.5 2.500h9v9h-9zM2.500 2V.5h9v9H10" stroke="#000" /></svg>
      </button>
      <button aria-label="Close" className="flex h-7 w-[58px] items-center justify-center">
        <svg viewBox="0 0 12 12" className="h-3 w-3"><path d="M0 0l12 12M12 0L0 12" stroke="#000" /></svg>
      </button>
    </div>
  </header>
);

const MenuBar = () => (
  <div className="flex h-7 shrink-0 items-center justify-between border-t border-[#e6e6e6] bg-white pr-1">
    <nav className="flex gap-3 pb-[2px] pl-[5px]">
      {menus.map((m) => (
        <button key={m} className="font-['Noto_Sans',sans-serif] text-[15px] leading-5 text-[#222]">
          {m}
        </button>
      ))}
    </nav>
    <label className="flex h-6 w-[230px] items-center border border-[#8aa5c4] bg-white">
      <span className="flex h-full w-8 shrink-0 items-center justify-center bg-[#eee]">
        <svg viewBox="0 0 26 20" className="h-5 w-[26px]" fill="none" aria-hidden="true">
          <path d="M11 12l6 7" stroke="#222" strokeWidth="3" />
          <circle cx="8" cy="8" r="6" fill="#d4e8f7" stroke="#5d6f80" strokeWidth="1.500" />
          <path d="M17 7h7l-3.500 4z" fill="#111" />
        </svg>
      </span>
      <input aria-label="Search" placeholder="Search (Ctrl+I)" className="w-full min-w-0 px-1 font-['Liberation_Mono',monospace] text-[12px] outline-none placeholder:text-[#777]" />
    </label>
  </div>
);

const Toolbar = () => (
  <div className="flex h-[43px] shrink-0 items-start border-t-2 border-b-2 border-t-[#b5b5b5] border-b-[#a8a8a8] pl-1">
    {toolbar.map((group, g) => (
      <div key={g} className={`${group.width} flex h-[37px] items-center`}>
        <span className="mr-px h-7 w-0 shrink-0 border-l-2 border-dotted border-[#b0b0b0]" />
        {group.items.map((name, i) => (
          <button
            key={i}
            aria-label={name}
            className={`flex h-[37px] min-w-0 flex-1 items-center justify-center ${
              selectedTools.includes(name) ? "border border-[#93c1ea] bg-[#bfdaf2]" : ""
            }`}
          >
            {icons[name]}
          </button>
        ))}
        <span className="w-1 shrink-0" />
      </div>
    ))}
  </div>
);

const Cross = () => (
  <svg viewBox="0 0 10 10" className="h-[10px] w-[10px]" aria-hidden="true">
    <path d="M0 0l10 10M10 0L0 10" stroke="#444" strokeWidth="1.300" />
  </svg>
);

const Tab = ({ title, close, active }) => (
  <button
    className={`flex h-full items-center gap-[10px] border-r border-[#8c8f98] pl-[5px] font-['Liberation_Sans',sans-serif] text-[14px] font-bold whitespace-nowrap text-[#222] ${
      active ? "bg-white pr-[7px]" : "pr-6"
    }`}
  >
    {title}
    {close && <Cross />}
  </button>
);

const Minus = () => (
  <button aria-label="Minimize panel" className="mr-2 ml-auto flex h-5 w-3 items-center">
    <span className="h-[3px] w-full bg-[#666]" />
  </button>
);

const Expander = ({ open }) => (
  <span className="relative flex h-[11px] w-[11px] shrink-0 items-center justify-center border border-[#999] bg-white">
    <span className="h-px w-[5px] bg-[#23237a]" />
    {!open && <span className="absolute h-[5px] w-px bg-[#23237a]" />}
  </span>
);

const Database = () => (
  <svg viewBox="0 0 16 16" className="h-4 w-4 shrink-0" aria-hidden="true">
    <path d="M1 3v10q7 4 13 0V3z" fill="#e8e8e8" stroke="#333" strokeWidth=".8" />
    <path d="M1 6q7 4 13 0M1 9q7 4 13 0M1 12.500q7 4 13 0" fill="none" stroke="#111" strokeWidth="1.500" />
    <ellipse cx="7.500" cy="3" rx="6.500" ry="2.500" fill="#f8f8f8" stroke="#333" strokeWidth=".8" />
  </svg>
);

const Folder = () => (
  <svg viewBox="0 0 20 16" className="h-4 w-5 shrink-0" aria-hidden="true">
    <path d="M1 3l2-2h5l2 2h7v11H1z" fill="#cfcffa" stroke="#55558c" strokeWidth="1.200" />
    <path d="M3 5h13v8H3z" fill="#c0c0f2" />
    <path d="M18 4v11H2" fill="none" stroke="#33335c" strokeWidth="1.200" />
  </svg>
);

const Explorer = () => (
  <section className="flex min-h-0 flex-1 flex-col border border-[#8c8f98] bg-white">
    <div className="flex h-[26px] shrink-0 items-center border-b border-[#8c8f98] bg-linear-to-b from-[#f2f2f2] to-[#e2e2e2]">
      <Tab title="Product Explorer" close active />
      <Tab title="Pixel Info" />
      <Minus />
    </div>
    <ul className="font-['Liberation_Mono',monospace] text-[12px] text-[#111]">
      <li className="flex h-[23px] items-center pl-[5px]">
        <Expander />
        <span className="w-[11px] border-t border-dotted border-[#999]" />
        <Database />
        <span className="ml-[11px] px-[3px]">[1] S2A_MSIL1C_20190628T023551_N0207_R089_T51RUQ_20190628T061110</span>
      </li>
      <li>
        <div className="flex h-[23px] items-center pl-[5px]">
          <Expander open />
          <span className="w-[11px] border-t border-dotted border-[#999]" />
          <Database />
          <span className="ml-[11px] bg-[#e3e3e3] px-[3px] leading-[22px]">[2] Output Product</span>
        </div>
        <ul>
          {["Metadata", "Index Codings", "Vector Data", "Bands", "Masks"].map((name) => (
            <li key={name} className="flex h-[23px] items-center pl-[29px]">
              <Expander />
              <span className="w-[10px] border-t border-dotted border-[#999]" />
              <Folder />
              <span className="ml-2">{name}</span>
            </li>
          ))}
        </ul>
      </li>
    </ul>
  </section>
);

const NAV_LAND = [[0, 310], [165, 310], [155, 330], [120, 340], [95, 352], [80, 366], [0, 366]];
const navLand = [specks(NAV_LAND, 900, 3, 71), specks(NAV_LAND, 260, 1, 72)];

const Navigation = () => (
  <section className="flex h-[442px] shrink-0 flex-col border border-[#8c8f98]">
    <div className="flex h-[26px] shrink-0 items-center border-b border-[#8c8f98] bg-linear-to-b from-[#f2f2f2] to-[#e2e2e2]">
      <Tab title="Navigation" close active />
      <Minus />
    </div>
    <div className="mt-[5px] mr-11 ml-[5px] min-h-0 flex-1 overflow-hidden bg-[#333] pl-[77px]">
      <svg viewBox="0 0 320 366" className="h-full w-[320px]" role="img" aria-label="Product overview">
        <defs>
          <filter id="cloud" x="-40%" y="-40%" width="180%" height="180%">
            <feTurbulence type="fractalNoise" baseFrequency="0.06" numOctaves="3" seed="3" result="n" />
            <feDisplacementMap in="SourceGraphic" in2="n" scale="16" xChannelSelector="R" yChannelSelector="G" result="d" />
            <feGaussianBlur in="d" stdDeviation="2" />
          </filter>
        </defs>
        <path d="M0 0H380L308 366H0z" fill="#9eab95" />
        <path d={toPath(NAV_LAND)} fill="#2c1d1e" stroke="#c4b598" strokeWidth="2" />
        <path d={navLand[0]} fill="#4d3a39" />
        <path d={navLand[1]} fill="#9a8c88" />
        <g filter="url(#cloud)">
          <path d="M0 340L40 350 30 366H0z" fill="#240f10" />
          <path d="M35 362L52 342 72 345 78 366H35z" fill="#dfe2ee" />
          <path d="M170 340L175 326 182 330 180 366H172z" fill="#4a3530" />
          <path d="M205 360L210 345 225 325 236 345 222 358z" fill="#45302e" />
          <path d="M215 310L224 335 238 330 232 310z" fill="#7d695e" />
          <path d="M188 350L194 342 192 366H186z" fill="#f2f2f2" />
          <path d="M236 355L246 332 262 366H232z" fill="#f4f6fa" />
          <path d="M244 310L260 320 264 345 248 325z" fill="#c4a98f" />
        </g>
        <path d="M95 356L180 346M120 360L170 356" stroke="#b5a88b" strokeWidth="3" opacity=".5" />
      </svg>
    </div>
    <div className="flex shrink-0 items-center py-[6px] pl-[5px] font-['Liberation_Mono',monospace] text-[13px]">
      <input aria-label="Zoom factor" defaultValue=": 31.45" className="h-8 w-[68px] border border-[#b0b3ba] bg-white pr-1 text-right outline-none" />
      <input
        type="range"
        aria-label="Zoom"
        defaultValue="37"
        className="ml-2 h-8 min-w-0 flex-1 appearance-none bg-transparent [&::-webkit-slider-runnable-track]:h-[5px] [&::-webkit-slider-runnable-track]:border [&::-webkit-slider-runnable-track]:border-[#d0d0d0] [&::-webkit-slider-runnable-track]:bg-[#e3e3e3] [&::-webkit-slider-thumb]:mt-[-12px] [&::-webkit-slider-thumb]:h-[26px] [&::-webkit-slider-thumb]:w-[6px] [&::-webkit-slider-thumb]:appearance-none [&::-webkit-slider-thumb]:bg-[#0a7ad8]"
      />
      <div className="ml-4 flex h-8 w-[74px] items-center border border-[#b0b3ba] bg-white pr-px">
        <input aria-label="Rotation" defaultValue="0°" className="w-full min-w-0 pl-3 outline-none" />
        <div className="flex h-full w-[19px] shrink-0 flex-col gap-px py-[2px]">
          <button aria-label="Increase" className="flex flex-1 items-center justify-center border border-[#aaa] bg-[#eee] font-['DejaVu_Sans',sans-serif] text-[7px] leading-none">▲</button>
          <button aria-label="Decrease" className="flex flex-1 items-center justify-center border border-[#aaa] bg-[#eee] font-['DejaVu_Sans',sans-serif] text-[7px] leading-none">▼</button>
        </div>
      </div>
      <button aria-label="Help" className="mr-2 ml-[6px] flex w-[29px] justify-center">
        <HelpIcon />
      </button>
    </div>
  </section>
);

const View = ({ id, title, focused, children }) => (
  <section className="flex min-w-0 flex-1 flex-col">
    <div className="flex h-[26px] shrink-0 items-end">
      <button
        className={`flex h-full items-center border border-b-0 pr-[6px] pl-1 font-['Liberation_Mono',monospace] text-[12px] whitespace-nowrap text-[#111] ${
          focused ? "border-[#5a8db8] bg-linear-to-b from-[#edf5fd] to-[#d9e9f8]" : "border-[#8c8f98] bg-white"
        }`}
      >
        <svg viewBox="0 0 18 18" className="mr-[6px] h-[18px] w-[18px]" aria-hidden="true">
          <path d="M3 3h15v15H3z" fill="#777" />
          <path d="M1 1h14v14H1z" fill="#8a8ac0" stroke="#222" strokeWidth="1.200" />
          <path d="M2 4h12M2 7h12M2 10h12M2 13h12M5 2v12M9 2v12M12 2v12" stroke="#33335c" strokeWidth=".8" />
          <path d="M7 3h2v3H7zM10 5h3v3h-3zM3 8h3v3H3zM9 11h4v2H9zM4 3h2v2H4z" fill="#d8c832" />
        </svg>
        <span className="mr-6">{title}</span>
        <Cross />
      </button>
      <div className="flex h-full flex-1 items-start justify-end border-b border-[#8c8f98]">
        <svg viewBox="0 0 84 18" className="h-[18px] w-[84px]" aria-hidden="true">
          <path d="M11 4v12L5 10zM27 4v12l6-6z" fill="#c0c0c0" />
          <path d="M45 6h14l-7 8z" fill="#444" />
          <path d="M67.500 5.500h12v10h-12z" fill="none" stroke="#444" strokeWidth="1.200" />
          <path d="M67 5h13v3H67z" fill="#444" />
        </svg>
      </div>
    </div>
    <div className="relative min-h-0 flex-1 overflow-hidden border-r border-b border-l border-[#8c8f98]">
      <Imagery id={id} />
      {focused && <div className="absolute inset-0 border-4 border-[#e3c04a] shadow-[inset_0_0_5px_2px_#c9b66a]" />}
      {children}
    </div>
  </section>
);

const Pin = () => (
  <div className="absolute top-[63%] left-[43%] flex w-[60px] -translate-x-1/2 flex-col items-center">
    <svg viewBox="0 0 60 34" className="h-[34px] w-[60px]" aria-hidden="true">
      <path d="M31 32L47 15" stroke="#e8e8f0" strokeWidth="3" />
      <path d="M36 27L49 13" stroke="#3838d0" strokeWidth="1.500" />
      <circle cx="52" cy="10" r="7" fill="#2d2dda" stroke="#9a9ad6" />
    </svg>
    <span className="mt-2 font-['Liberation_Sans',sans-serif] text-[16px] leading-[18px] font-bold whitespace-nowrap text-white [text-shadow:0_0_2px_#000,0_0_2px_#000,0_0_3px_#000,0_0_3px_#000]">
      Pin 1
    </span>
  </div>
);

const PinManager = () => (
  <section className="flex h-[268px] shrink-0 flex-col border border-[#8c8f98]">
    <div className="flex h-[25px] shrink-0 items-center border-b border-[#8c8f98] bg-linear-to-b from-[#f2f2f2] to-[#e2e2e2]">
      <Minus />
    </div>
    <div className="flex min-h-0 flex-1 py-[5px] pl-[5px]">
      <div className="min-w-0 flex-1 border border-[#8c8f98]">
        <table className="w-[549px] border-collapse bg-white text-right font-['Liberation_Mono',monospace] text-[12px]">
          <tbody>
            <tr className="h-[33px]">
              <td />
            </tr>
            <tr className="h-5">
              <td className="border-r border-b border-[#888] pr-1">Pin 1</td>
            </tr>
          </tbody>
        </table>
      </div>
      <div className="flex w-[79px] shrink-0 flex-col items-center justify-between">
        <div className="grid grid-cols-[33px_33px] gap-y-[6px] pt-[3px]">
          {["newPin", "copy", "edit", "remove", "importDown", "exportUp", "filter", "tableExport", "zoomPin", "transfer"].map((n) => (
            <button key={n} aria-label={n} className="flex justify-center">
              {icons[n]}
            </button>
          ))}
        </div>
        <button aria-label="Help" className="mr-[9px] mb-1 self-end">
          <HelpIcon />
        </button>
      </div>
    </div>
  </section>
);

const sideTabs = [
  {
    name: "Product Library",
    icon: (
      <>
        <path d="M5 6h12v11H5z" fill="#7db8e0" stroke="#4a8bb8" />
        <circle cx="6" cy="5" r="4.500" fill="#dcecf7" stroke="#8a98a5" />
        <path d="M9 9l6 7" stroke="#fff" strokeWidth="2" />
      </>
    ),
  },
  {
    name: "Layer Manager",
    icon: <path d="M4 2h13l-3 4H1zM4 6h13l-3 4H1zM4 10h13l-3 4H1z" fill="#b5b5ea" stroke="#33338c" />,
  },
  {
    name: "Mask Manager",
    icon: (
      <>
        <path d="M5 9h12l-4 7H1z" fill="#9a9ad6" stroke="#222" />
        <path d="M5 3h12l-4 7H1z" fill="#fff" stroke="#222" />
        <path d="M8 5h4v3H7z" fill="#e02020" />
      </>
    ),
  },
];

const SideBar = () => (
  <aside className="flex w-[31px] shrink-0 flex-col items-center gap-[18px] pt-2">
    {sideTabs.map((t, i) => (
      <React.Fragment key={t.name}>
        {i > 0 && <span className="h-px w-6 bg-[#999]" />}
        <button className="flex flex-col items-center gap-[7px] font-['Liberation_Mono',monospace] text-[12px] leading-4 text-[#111]">
          <svg viewBox="0 0 18 18" className="h-[18px] w-[18px]" fill="none" aria-hidden="true">
            {t.icon}
          </svg>
          <span className="[writing-mode:vertical-rl]">{t.name}</span>
        </button>
      </React.Fragment>
    ))}
  </aside>
);

const spectrum = [
  [443, 0.193], [490, 0.185], [560, 0.1913], [665, 0.176], [705, 0.1435], [740, 0.118], [783, 0.1286],
  [842, 0.113], [865, 0.1248], [945, 0.013], [1375, 0.0005], [1610, 0.118], [2190, 0.0925],
];

const sx = (nm) => 162.6 + (nm - 500) * 0.4648;
const sy = (v) => 406 - v * 1312;

const Star = ({ x, y }) => (
  <path
    transform={`translate(${x} ${y})`}
    d="M0-8L2-2.500H8L3.200 1.200 5 7.500 0 3.800-5 7.500-3.200 1.200-8-2.500H-2z"
    fill="none"
    stroke="#1a1aff"
    strokeWidth="1.800"
  />
);

const Chart = () => (
  <svg viewBox="0 0 1009 506" className="h-full w-full font-['DejaVu_Sans_Condensed','DejaVu_Sans',sans-serif]" role="img" aria-label="Spectrum View">
    <text x="503" y="29" textAnchor="middle" className="text-[25px] font-bold" fill="#000">Spectrum View</text>
    <rect x="97" y="47" width="893" height="359" fill="#e1e1e1" stroke="#777" />
    {Array.from({ length: 11 }, (_, i) => (
      <g key={i}>
        {i > 0 && <path d={`M97 ${sy(i * 0.025)}H990`} stroke="#f5f5f5" strokeDasharray="4 2" />}
        <path d={`M89 ${sy(i * 0.025)}h4`} stroke="#777" />
        <text x="83" y={sy(i * 0.025) + 6} textAnchor="end" className="text-[16px]" fill="#5a5a5a">
          {(i * 0.025).toFixed(3)}
        </text>
      </g>
    ))}
    {Array.from({ length: 8 }, (_, i) => 500 + i * 250).map((nm) => (
      <g key={nm}>
        <path d={`M${sx(nm)} 47V406`} stroke="#f5f5f5" strokeDasharray="4 2" />
        <path d={`M${sx(nm)} 411v3`} stroke="#777" />
        <text x={sx(nm)} y="431" textAnchor="middle" className="text-[16px]" fill="#5a5a5a">
          {nm.toLocaleString("en-US")}
        </text>
      </g>
    ))}
    <path d="M92.500 47V406M97 411.500H990" stroke="#777" />
    <clipPath id="plot">
      <rect x="97" y="47" width="893" height="359" />
    </clipPath>
    <g clipPath="url(#plot)">
      <polyline points={spectrum.map(([nm, v]) => `${sx(nm)},${sy(v)}`).join(" ")} fill="none" stroke="#5a5af5" strokeWidth="1.500" strokeDasharray="1.500 6" />
      {spectrum.map(([nm, v]) => (
        <Star key={nm} x={sx(nm)} y={sy(v)} />
      ))}
    </g>
    <text transform="translate(33 226) rotate(-90)" textAnchor="middle" className="text-[16px] font-bold" fill="#444">dl</text>
    <text x="542" y="454" textAnchor="middle" className="text-[17px] font-bold" fill="#444">Wavelength (nm)</text>
    <rect x="369" y="468" width="269" height="32" fill="#fff" stroke="#222" />
    <path d="M377 484h50" stroke="#5a5af5" strokeWidth="1.500" strokeDasharray="1.500 5" />
    <Star x={403} y={484} />
    <text x="434" y="490" className="font-['Liberation_Sans',sans-serif] text-[16px]" fill="#222">Pin 1_Bands measured in dl</text>
  </svg>
);

const SpectrumTool = ({ name, active }) => (
  <button aria-label={name} className={`flex h-[33px] w-[34px] items-center justify-center ${active ? "border-2 border-[#b3aca0] bg-[#fdb867]" : ""}`}>
    {icons[name]}
  </button>
);

const SpectrumDialog = () => (
  <div role="dialog" aria-label="Spectrum View" className="absolute top-[323px] left-[59px] flex h-[585px] w-[1064px] flex-col border border-[#8c8f98] bg-[#f0f0f0] shadow-[0_4px_14px_rgba(0,0,0,0.5)]">
    <div className="flex h-[38px] shrink-0 items-center justify-between bg-white pr-[15px] pl-[9px]">
      <SnapLogo />
      <button aria-label="Close" className="p-0">
        <svg viewBox="0 0 12 12" className="h-3 w-3" aria-hidden="true"><path d="M0 0l12 12M12 0L0 12" stroke="#888" /></svg>
      </button>
    </div>
    <div className="flex h-[26px] shrink-0 border-t border-b border-[#8c8f98] bg-linear-to-b from-[#f2f2f2] to-[#e2e2e2]">
      <Tab title="Spectrum View" close active />
    </div>
    <div className="flex min-h-0 flex-1 pt-[6px] pb-[5px] pl-[6px]">
      <div className="min-w-0 flex-1 border-t-2 border-l-2 border-[#999] bg-white">
        <Chart />
      </div>
      <div className="relative flex w-[45px] shrink-0 flex-col items-center gap-[3px] pt-px pr-[3px]">
        <SpectrumTool name="filter" />
        <SpectrumTool name="cursorSpectrum" />
        <SpectrumTool name="pinGray" />
        <SpectrumTool name="pinSpectrum" active />
        <SpectrumTool name="gridSpectrum" active />
        <SpectrumTool name="exportUp" />
        <button aria-label="Help" className="mt-auto mb-[3px]">
          <HelpIcon />
        </button>
        <span className="absolute top-[100px] -left-[7px] h-[56px] w-[62px] rounded-[50%] border-4 border-[#f50505]" />
      </div>
    </div>
  </div>
);

const StatusBar = () => (
  <footer className="relative flex h-[26px] shrink-0 items-stretch justify-end pr-8 font-['Liberation_Mono',monospace] text-[12px] text-[#111]">
    <div className="flex w-[153px] items-center justify-between border-l border-[#aaa] px-2 pt-1">
      <span>X</span>
      <span className="ml-5">——</span>
      <span>Y</span>
      <span className="ml-5">——</span>
    </div>
    <div className="flex w-[252px] items-center justify-between border-l border-[#aaa] px-7 pt-1">
      <span>Lat</span>
      <span className="ml-8">——</span>
      <span>Lon</span>
      <span className="ml-8">——</span>
    </div>
    <div className="flex w-[161px] items-center justify-between border-l border-[#aaa] pt-1 pl-[31px]">
      <span>Zoom</span>
      <span>——</span>
      <span>Level</span>
      <span>——</span>
    </div>
    <span className="absolute right-[7px] bottom-0 font-['Liberation_Sans',sans-serif] text-[16px] leading-4 text-white/80 [text-shadow:0_0_1px_#999]">
      https://blog.csdn.net/lidahuilidahui
    </span>
  </footer>
);

const TaskBar = () => (
  <div className="flex h-[11px] shrink-0 items-end overflow-hidden bg-[#0a0a0a]">
    <span className="ml-[60px] h-full w-[430px] bg-[#f2f2f2]" />
    <span className="ml-[215px] h-px w-1 bg-white" />
    <span className="ml-[108px] h-px w-[30px] bg-[#e01010]" />
    <span className="ml-[37px] h-px w-5 bg-[#d02020]" />
    <span className="ml-[37px] h-px w-[30px] bg-[#10d010]" />
    <span className="ml-[17px] flex h-full w-[61px] items-end bg-[#3a3a3a] pl-[15px]">
      <span className="h-px w-[10px] bg-[#999]" />
      <span className="h-px w-5 bg-[#10104a]" />
    </span>
    <span className="ml-auto h-full w-[126px] border-r border-[#555] pt-1 font-['Open_Sans',sans-serif] text-[15px] leading-[17px] text-white">16:49</span>
    <span className="w-[7px]" />
  </div>
);

const App = () => {
  return (
    <div className="relative flex h-screen flex-col overflow-hidden border-r border-r-black bg-[#f0f0f0]">
      <TitleBar />
      <MenuBar />
      <Toolbar />
      <main className="flex min-h-0 flex-1 pt-[9px] pb-[2px] pl-1">
        <div className="mr-[6px] flex w-[573px] shrink-0 flex-col gap-[5px]">
          <Explorer />
          <Navigation />
        </div>
        <div className="flex min-w-0 flex-1 flex-col gap-[5px]">
          <div className="flex min-h-0 flex-1 gap-[6px]">
            <View id="v1" title="[1] Sentinel 2 MSI Natural Colors RGB" focused />
            <View id="v2" title="[2] Sentinel 2 MSI Natural Colors RGB">
              <Pin />
            </View>
          </div>
          <PinManager />
        </div>
        <SideBar />
      </main>
      <StatusBar />
      <TaskBar />
      <SpectrumDialog />
    </div>
  );
};

export default App;
